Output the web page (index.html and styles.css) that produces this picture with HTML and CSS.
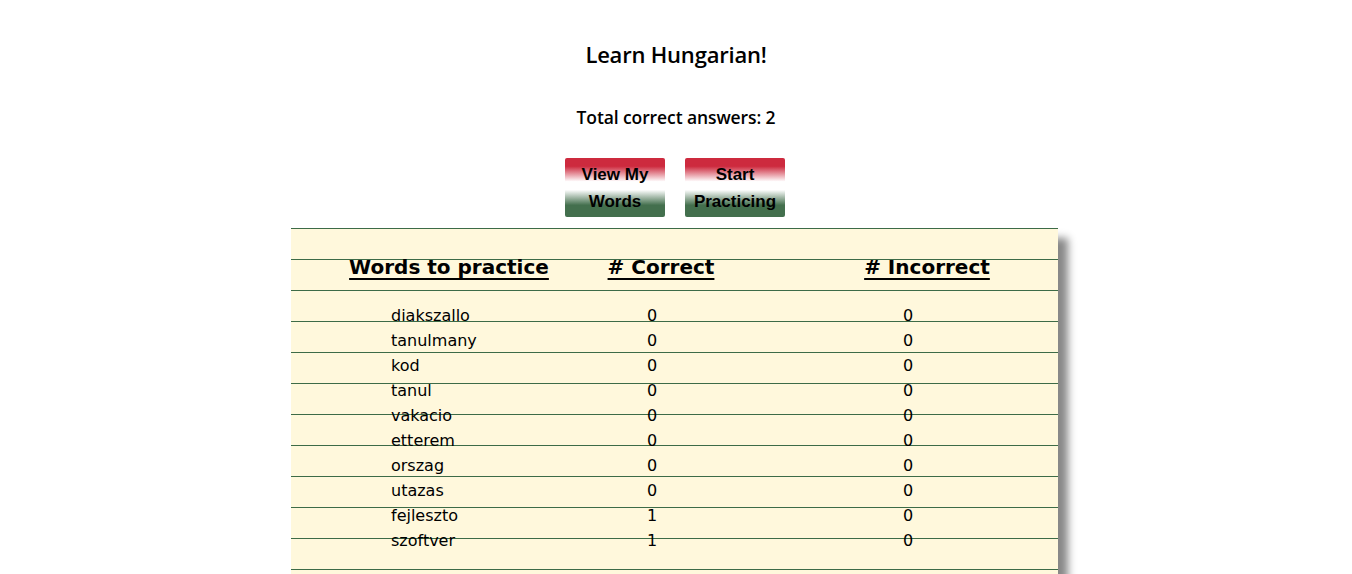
FILE: index.html
```html
<!DOCTYPE html>
<html>
<head>
<meta charset="utf-8">
<title>Learn Hungarian!</title>
<link rel="stylesheet" href="styles.css">
</head>
<body>
<header class="top">
  <h1 class="title">Learn Hungarian!</h1>
  <p class="total">Total correct answers: 2</p>
  <nav class="actions">
    <button class="flag-btn">View My Words</button>
    <button class="flag-btn">Start Practicing</button>
  </nav>
</header>
<main class="paper">
  <div class="row head">
    <div class="c1"><span>Words to practice</span></div>
    <div class="c2"><span># Correct</span></div>
    <div class="c3"><span># Incorrect</span></div>
  </div>
  <div class="rows">
    <div class="row"><div class="c1">diakszallo</div><div class="c2">0</div><div class="c3">0</div></div>
    <div class="row"><div class="c1">tanulmany</div><div class="c2">0</div><div class="c3">0</div></div>
    <div class="row"><div class="c1">kod</div><div class="c2">0</div><div class="c3">0</div></div>
    <div class="row"><div class="c1">tanul</div><div class="c2">0</div><div class="c3">0</div></div>
    <div class="row"><div class="c1">vakacio</div><div class="c2">0</div><div class="c3">0</div></div>
    <div class="row"><div class="c1">etterem</div><div class="c2">0</div><div class="c3">0</div></div>
    <div class="row"><div class="c1">orszag</div><div class="c2">0</div><div class="c3">0</div></div>
    <div class="row"><div class="c1">utazas</div><div class="c2">0</div><div class="c3">0</div></div>
    <div class="row"><div class="c1">fejleszto</div><div class="c2">1</div><div class="c3">0</div></div>
    <div class="row"><div class="c1">szoftver</div><div class="c2">1</div><div class="c3">0</div></div>
  </div>
</main>
</body>
</html>
```
FILE: styles.css
```css
html::-webkit-scrollbar { width: 3px; }
html::-webkit-scrollbar-track { background: #f1f1f1; }
html::-webkit-scrollbar-thumb { background: #c1c1c1; }

body {
  margin: 0;
  background: #fff;
  color: #000;
  font-family: "Open Sans", "Noto Sans", sans-serif;
}

.top {
  display: flex;
  flex-direction: column;
  align-items: center;
  padding-top: 38px;
}

.title {
  margin: 0;
  font-size: 22px;
  font-weight: 600;
  line-height: 32px;
  letter-spacing: -0.2px;
}

.total {
  margin: 35px 0 0;
  font-size: 17.5px;
  font-weight: 600;
  line-height: 24px;
  letter-spacing: -0.1px;
}

.actions {
  display: flex;
  gap: 20px;
  margin-top: 29px;
  margin-right: 2px;
}

.flag-btn {
  width: 100px;
  height: 59px;
  padding: 0 4px;
  border: none;
  border-radius: 2px;
  background: linear-gradient(to bottom, #cd2a3e 0%, #cd2a3e 14%, #ffffff 40%, #ffffff 54%, #436f4d 80%, #436f4d 100%);
  font-family: "Liberation Sans", Arial, sans-serif;
  font-weight: bold;
  font-size: 17px;
  line-height: 27px;
  color: #000;
  text-align: center;
}

.paper {
  width: 767px;
  margin: 11px auto 40px;
  margin-left: 291px;
  height: 360px;
  background: repeating-linear-gradient(to bottom, #3d6b47 0, #3d6b47 1px, #fff8dc 1px, #fff8dc 31px);
  box-shadow: 10px 10px 8px #888;
  font-family: "Comic Sans MS", "DejaVu Sans", sans-serif;
}

.row {
  display: flex;
  font-size: 16px;
  line-height: 25px;
  height: 25px;
}

.row .c1 { width: 236px; margin-left: 40px; padding-left: 60px; box-sizing: border-box; text-align: left; }
.row .c2 { width: 188px; padding-right: 18px; box-sizing: border-box; text-align: center; }
.row .c3 { width: 256px; margin-left: 44px; padding-right: 38px; box-sizing: border-box; text-align: center; }

.row.head {
  padding-top: 25px;
  height: 28px;
  line-height: 28px;
  font-size: 20px;
  font-weight: bold;
}
.row.head .c1, .row.head .c2, .row.head .c3 {
  padding: 0;
  text-align: center;
}
.row.head span {
  text-decoration: underline;
  text-decoration-thickness: 2px;
  text-underline-offset: 4px;
}

.rows {
  padding-top: 22px;
}
```
